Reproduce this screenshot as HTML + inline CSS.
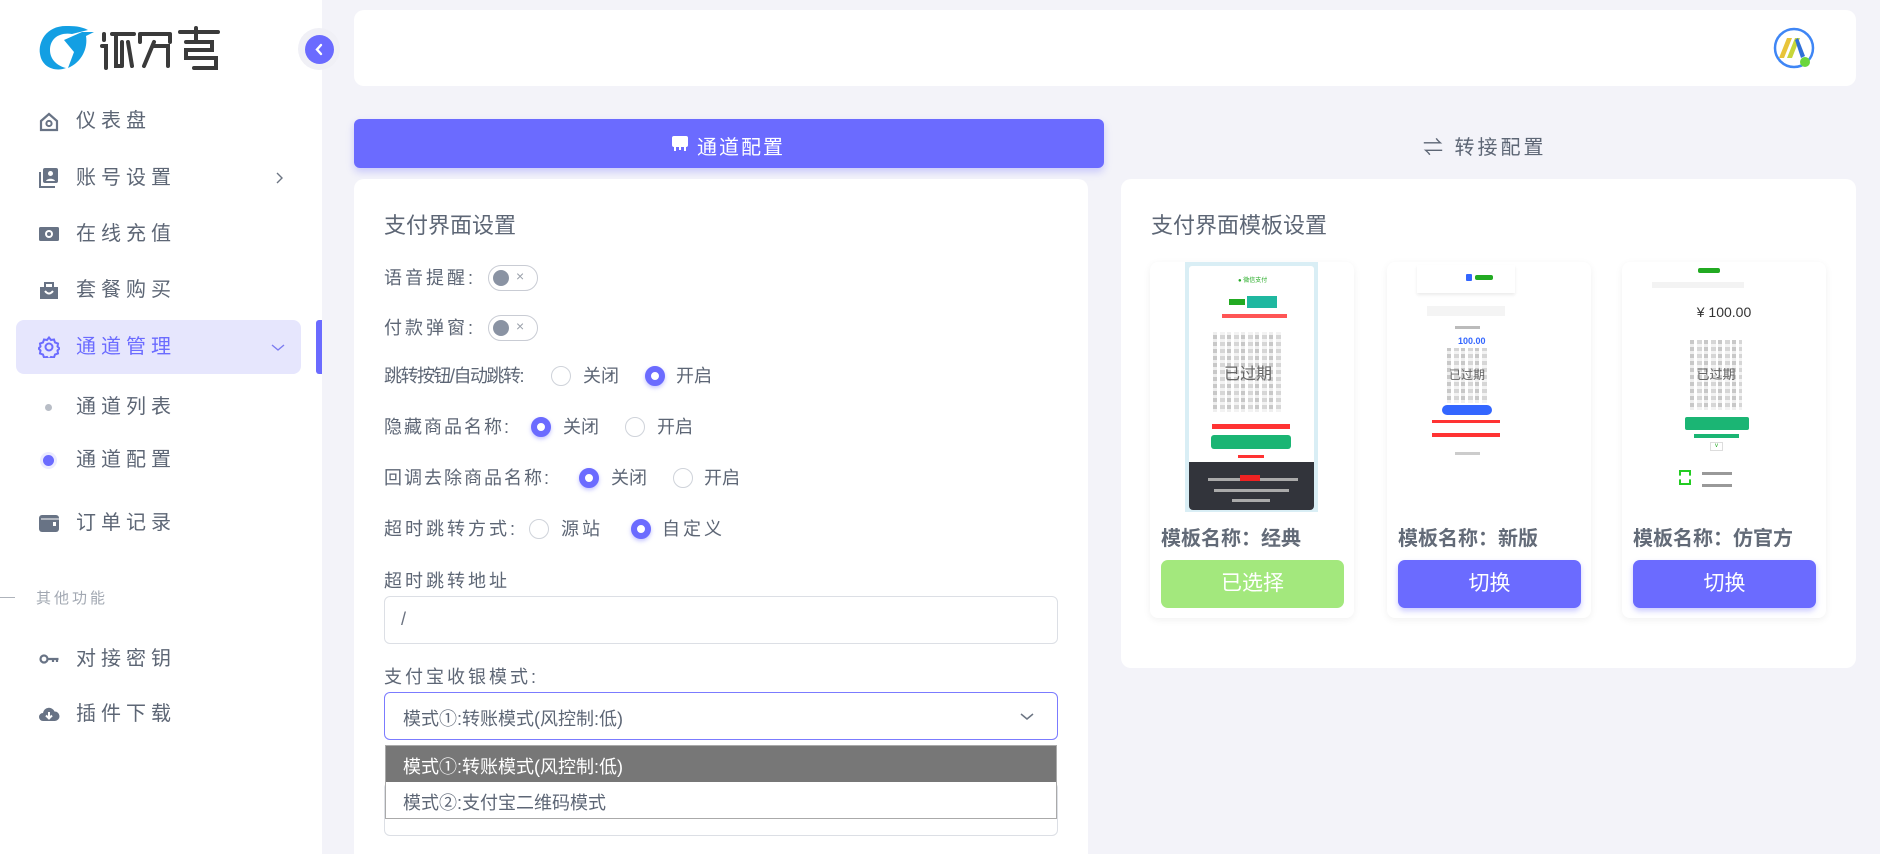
<!DOCTYPE html>
<html style="width:1880px;height:854px;overflow:hidden"><head><meta charset="utf-8">
<style>
*{margin:0;padding:0;box-sizing:border-box}
body{width:1880px;height:854px;overflow:hidden;background:#f3f3f9;font-family:"Liberation Sans","Noto Sans CJK SC",sans-serif;color:#5b6474;position:relative}
.abs{position:absolute}
.side{left:0;top:0;width:322px;height:854px;background:#fff}
.mi{position:absolute;left:76px;font-size:20px;letter-spacing:5px;color:#5d6675;line-height:24px}
.ic{position:absolute;left:38px;width:22px;height:22px}
.card{background:#fff;border-radius:10px;position:absolute}
.lbl{position:absolute;left:384px;font-size:18px;letter-spacing:3px;color:#5d6675;line-height:22px}
.tog{position:absolute;width:50px;height:26px;border:1px solid #c9ccd4;border-radius:13px;background:#fff}
.tog i{position:absolute;left:4px;top:4px;width:16px;height:16px;border-radius:50%;background:#8a93a3}
.tog b{position:absolute;left:27px;top:2px;font-size:14px;font-weight:normal;color:#9aa0aa}
.rd{position:absolute;width:20px;height:20px;border-radius:50%;border:1px solid #cfd3da;background:#fff}
.rd.on{border:6px solid #6b6bff;box-shadow:0 2px 4px rgba(107,107,255,.4)}
.rt{position:absolute;font-size:18px;color:#5d6675;line-height:22px}
.inp{position:absolute;left:384px;width:674px;height:48px;border:1px solid #dcdfe5;border-radius:6px;background:#fff}
.tc{position:absolute;top:262px;width:204px;height:356px;background:#fff;border-radius:8px;box-shadow:0 2px 8px rgba(0,0,0,.06)}
.tn{position:absolute;left:11px;top:260px;font-size:20px;font-weight:bold;color:#636b78}
.tb{position:absolute;left:11px;top:298px;width:183px;height:48px;border-radius:7px;color:#fff;font-size:21px;text-align:center;line-height:48px}
.qr{position:absolute;background:
 repeating-linear-gradient(90deg,#c8c8c8 0 4px,#fff 4px 7px,#d6d6d6 7px 12px,#fff 12px 14px),
 #ddd;}
.qr:after{content:"";position:absolute;inset:0;background:repeating-linear-gradient(0deg,rgba(255,255,255,.7) 0 3px,transparent 3px 7px)}
.qx{position:absolute;z-index:2;color:#666;text-align:center;width:100%}
</style></head><body>
<div class="abs side"></div>
<svg class="abs" style="left:36px;top:22px" width="190" height="52" viewBox="0 0 190 52">
<path d="M30 4 C10 4 2 20 4 32 C6 46 20 50 30 46 C22 44 14 38 14 28 C14 16 24 10 36 12 L52 8 C44 4 38 4 30 4Z" fill="#139fe3"/>
<path d="M28 18 L38 30 L32 46 C46 40 52 26 50 14 L58 10 L46 10Z" fill="#139fe3"/>
<g fill="none" stroke="#3a3a3a" stroke-width="4" stroke-linecap="round">
<path d="M68 12v6M66 24h4v22"/><path d="M76 12h22M80 12v32h6M86 20v24M92 20l4 24"/>
<path d="M104 12h30M104 12v8M134 12v8M118 20l-10 24M118 24h14v20"/>
<path d="M144 10h38M160 6v12M150 20h26v8h-26v8h30v10h-22"/>
</g></svg>
<div class="abs" style="left:298px;top:28px;width:42px;height:42px;border-radius:50%;background:#f0f0f6"></div>
<div class="abs" style="left:305px;top:35px;width:29px;height:29px;border-radius:50%;background:#6b6bff"></div>
<svg class="abs" style="left:312px;top:42px" width="15" height="15"><path d="M9 3 L5 7.5 L9 12" stroke="#fff" stroke-width="2.4" fill="none" stroke-linecap="round"/></svg>

<svg class="ic" style="top:111px" viewBox="0 0 22 22"><path d="M3 10 L11 3 L19 10 V19 H3Z" fill="none" stroke="#687385" stroke-width="2.2"/><circle cx="11" cy="12.5" r="2.6" fill="none" stroke="#687385" stroke-width="2"/></svg>
<div class="mi" style="top:109px">仪表盘</div>
<svg class="ic" style="top:167px" viewBox="0 0 22 22"><rect x="5" y="1" width="15" height="15" rx="2" fill="#687385"/><path d="M2 5v15h15" stroke="#687385" stroke-width="2" fill="none"/><circle cx="12.5" cy="6.5" r="2.5" fill="#fff"/><path d="M8 14c1-3 8-3 9 0z" fill="#fff"/></svg>
<div class="mi" style="top:166px">账号设置</div>
<svg class="abs" style="left:274px;top:170px" width="12" height="16"><path d="M3 3l5 5-5 5" stroke="#6c7583" stroke-width="1.4" fill="none"/></svg>
<svg class="ic" style="top:223px" viewBox="0 0 22 22"><rect x="1" y="4" width="20" height="14" rx="1.5" fill="#687385"/><circle cx="11" cy="11" r="4" fill="#fff"/><circle cx="11" cy="11" r="2" fill="#687385"/></svg>
<div class="mi" style="top:222px">在线充值</div>
<svg class="ic" style="top:279px" viewBox="0 0 22 22"><path d="M2 8h18v12H2z" fill="#687385"/><path d="M7 8V4h8v4" stroke="#687385" stroke-width="2" fill="none"/><path d="M7 12q4 5 8 0" stroke="#fff" stroke-width="2" fill="none"/></svg>
<div class="mi" style="top:278px">套餐购买</div>
<div class="abs" style="left:16px;top:320px;width:285px;height:54px;background:#e6e6fd;border-radius:8px"></div>
<div class="abs" style="left:316px;top:320px;width:6px;height:54px;background:#6b6bff;border-radius:3px 0 0 3px"></div>
<svg class="ic" style="top:336px" viewBox="0 0 22 22"><path d="M11 1.5l2 2.5 3-.5 1 3 3 1-.5 3 2 2-2 2 .5 3-3 1-1 3-3-.5-2 2.5-2-2.5-3 .5-1-3-3-1 .5-3-2-2 2-2-.5-3 3-1 1-3 3 .5z" fill="none" stroke="#6b6bff" stroke-width="2"/><circle cx="11" cy="11" r="3.5" fill="none" stroke="#6b6bff" stroke-width="2"/></svg>
<div class="mi" style="top:335px;color:#6b6bff">通道管理</div>
<svg class="abs" style="left:270px;top:342px" width="16" height="12"><path d="M2 3l6 5 6-5" stroke="#7c7cf0" stroke-width="1.4" fill="none"/></svg>
<div class="abs" style="left:45px;top:404px;width:7px;height:7px;border-radius:50%;background:#b8bdc6"></div>
<div class="mi" style="top:395px">通道列表</div>
<div class="abs" style="left:40px;top:452px;width:17px;height:17px;border-radius:50%;background:#ebebff"></div>
<div class="abs" style="left:43px;top:455px;width:11px;height:11px;border-radius:50%;background:#6b6bff"></div>
<div class="mi" style="top:448px">通道配置</div>
<svg class="ic" style="top:512px" viewBox="0 0 22 22"><rect x="1" y="3" width="20" height="17" rx="3" fill="#687385"/><path d="M3 7h18" stroke="#fff" stroke-width="1"/><rect x="15" y="10" width="3" height="4" fill="#fff"/></svg>
<div class="mi" style="top:511px">订单记录</div>
<div class="abs" style="left:0;top:597px;width:15px;height:1px;background:#aeb3bb"></div>
<div class="abs" style="left:36px;top:587px;font-size:15px;letter-spacing:3px;color:#a2a8b2">其他功能</div>
<svg class="ic" style="top:648px" viewBox="0 0 22 22"><circle cx="6" cy="11" r="3.5" fill="none" stroke="#687385" stroke-width="2.2"/><path d="M9.5 11h11M15 11v3M19 11v3" stroke="#687385" stroke-width="2.2"/></svg>
<div class="mi" style="top:647px">对接密钥</div>
<svg class="ic" style="top:703px" viewBox="0 0 22 22"><path d="M5 18a4 4 0 0 1 0-8 6 6 0 0 1 11.5-1.5A4.5 4.5 0 0 1 17 18z" fill="#687385"/><path d="M11 9v6M8 12.5l3 3 3-3" stroke="#fff" stroke-width="2" fill="none"/></svg>
<div class="mi" style="top:702px">插件下载</div>

<div class="card" style="left:354px;top:10px;width:1502px;height:76px"></div>
<svg class="abs" style="left:1772px;top:26px" width="46" height="46" viewBox="0 0 46 46">
<circle cx="22" cy="22" r="19" fill="none" stroke="#3f86f5" stroke-width="2.5"/>
<path d="M7 32 L15 12 L20 12 L12 32Z" fill="#e8c43a"/><path d="M15 32 L23 12 L28 12 L20 32Z" fill="#c7d63b"/>
<path d="M26 12 L33 30 L29 32 L23 14Z" fill="#2f6fd8"/><circle cx="33" cy="36" r="5" fill="#6ad63c"/></svg>

<div class="abs" style="left:354px;top:119px;width:750px;height:49px;background:#6b6bff;border-radius:6px;box-shadow:0 4px 8px rgba(107,107,255,.3)"></div>
<svg class="abs" style="left:671px;top:134px" width="18" height="20"><rect x="1" y="2" width="16" height="11" rx="2" fill="#fff"/><path d="M4 13v4M9 13v3M14 13v4" stroke="#fff" stroke-width="2"/></svg>
<div class="abs" style="left:697px;top:131px;font-size:20px;letter-spacing:2px;color:#fff">通道配置</div>
<div class="abs" style="left:1423px;top:131px;font-size:20px;letter-spacing:3px;color:#5d6675">⇌ 转接配置</div>

<div class="card" style="left:354px;top:179px;width:734px;height:700px;border-radius:10px 10px 0 0"></div>
<div class="abs" style="left:384px;top:208px;font-size:22px;color:#5d6675">支付界面设置</div>
<div class="lbl" style="top:267px">语音提醒:</div>
<div class="tog" style="left:488px;top:265px"><i></i><b>×</b></div>
<div class="lbl" style="top:317px">付款弹窗:</div>
<div class="tog" style="left:488px;top:315px"><i></i><b>×</b></div>
<div class="lbl" style="top:365px;letter-spacing:-1.5px">跳转按钮/自动跳转:</div>
<div class="rd" style="left:551px;top:366px"></div><div class="rt" style="left:583px;top:365px">关闭</div>
<div class="rd on" style="left:645px;top:366px"></div><div class="rt" style="left:676px;top:365px">开启</div>
<div class="lbl" style="top:416px;letter-spacing:2px">隐藏商品名称:</div>
<div class="rd on" style="left:531px;top:417px"></div><div class="rt" style="left:563px;top:416px">关闭</div>
<div class="rd" style="left:625px;top:417px"></div><div class="rt" style="left:657px;top:416px">开启</div>
<div class="lbl" style="top:467px;letter-spacing:2px">回调去除商品名称:</div>
<div class="rd on" style="left:579px;top:468px"></div><div class="rt" style="left:611px;top:467px">关闭</div>
<div class="rd" style="left:673px;top:468px"></div><div class="rt" style="left:704px;top:467px">开启</div>
<div class="lbl" style="top:518px">超时跳转方式:</div>
<div class="rd" style="left:529px;top:519px"></div><div class="rt" style="left:561px;top:518px;letter-spacing:3px">源站</div>
<div class="rd on" style="left:631px;top:519px"></div><div class="rt" style="left:662px;top:518px;letter-spacing:3px">自定义</div>
<div class="lbl" style="top:570px">超时跳转地址</div>
<div class="inp" style="top:596px"><div class="abs" style="left:16px;top:12px;font-size:18px;color:#6b7280">/</div></div>
<div class="lbl" style="top:666px">支付宝收银模式:</div>
<div class="inp" style="top:692px;border-color:#7b7bff"><div class="abs" style="left:18px;top:12px;font-size:18px;color:#5d6675">模式①:转账模式(风控制:低)</div>
<svg class="abs" style="left:634px;top:18px" width="16" height="12"><path d="M2 3l6 5 6-5" stroke="#6c7583" stroke-width="1.5" fill="none"/></svg></div>
<div class="inp" style="top:782px;height:54px"></div>
<div class="abs" style="left:385px;top:745px;width:672px;height:74px;background:#fff;border:1px solid #aaa"></div>
<div class="abs" style="left:386px;top:746px;width:670px;height:36px;background:#777"></div>
<div class="abs" style="left:403px;top:753px;font-size:18px;color:#fff">模式①:转账模式(风控制:低)</div>
<div class="abs" style="left:403px;top:789px;font-size:18px;color:#5d6675">模式②:支付宝二维码模式</div>

<div class="card" style="left:1121px;top:179px;width:735px;height:489px"></div>
<div class="abs" style="left:1151px;top:208px;font-size:22px;color:#5d6675">支付界面模板设置</div>

<div class="tc" style="left:1150px">
 <div class="abs" style="left:35px;top:0;width:133px;height:250px;background:#d9eef5"></div>
 <div class="abs" style="left:39px;top:4px;width:125px;height:200px;background:#fff;border-radius:3px"></div>
 <div class="abs" style="left:88px;top:13px;font-size:6px;color:#2a2">● 微信支付</div>
 <div class="abs" style="left:79px;top:37px;width:16px;height:6px;background:#2a2"></div>
 <div class="abs" style="left:97px;top:34px;width:30px;height:12px;background:#1fb8a0"></div>
 <div class="abs" style="left:72px;top:52px;width:65px;height:4px;background:#f55"></div>
 <div class="qr" style="left:63px;top:70px;width:70px;height:80px"><div class="qx" style="top:28px;font-size:16px">已过期</div></div>
 <div class="abs" style="left:62px;top:162px;width:78px;height:5px;background:#f33"></div>
 <div class="abs" style="left:61px;top:173px;width:80px;height:14px;background:#1bb574;border-radius:3px"></div>
 <div class="abs" style="left:88px;top:193px;width:26px;height:3px;background:#f33"></div>
 <div class="abs" style="left:39px;top:200px;width:125px;height:48px;background:#32343b;border-radius:0 0 4px 4px"></div>
 <div class="abs" style="left:58px;top:216px;width:90px;height:3px;background:#aaa"></div><div class="abs" style="left:90px;top:213px;width:20px;height:6px;background:#e22"></div>
 <div class="abs" style="left:64px;top:227px;width:75px;height:3px;background:#aaa"></div>
 <div class="abs" style="left:82px;top:237px;width:38px;height:3px;background:#aaa"></div>
 <div class="tn">模板名称：经典</div>
 <div class="tb" style="background:#a3e87d">已选择</div>
</div>

<div class="tc" style="left:1387px">
 <div class="abs" style="left:30px;top:3px;width:98px;height:28px;background:#fff;box-shadow:0 2px 3px rgba(0,0,0,.08)"></div>
 <div class="abs" style="left:79px;top:12px;width:6px;height:7px;background:#36f;border-radius:1px"></div><div class="abs" style="left:88px;top:13px;width:18px;height:5px;background:#2a2;border-radius:2px"></div>
 <div class="abs" style="left:40px;top:44px;width:78px;height:10px;background:#f4f4f4"></div>
 <div class="abs" style="left:68px;top:64px;width:25px;height:3px;background:#bbb"></div>
 <div class="abs" style="left:71px;top:74px;font-size:9px;font-weight:bold;color:#36f">100.00</div>
 <div class="qr" style="left:60px;top:86px;width:40px;height:55px"><div class="qx" style="top:18px;font-size:12px">已过期</div></div>
 <div class="abs" style="left:55px;top:143px;width:50px;height:10px;background:#36f;border-radius:5px"></div>
 <div class="abs" style="left:45px;top:158px;width:68px;height:3px;background:#f33"></div>
 <div class="abs" style="left:45px;top:171px;width:68px;height:4px;background:#f33"></div>
 <div class="abs" style="left:68px;top:190px;width:25px;height:3px;background:#ccc"></div>
 <div class="tn">模板名称：新版</div>
 <div class="tb" style="background:#6b6bff;box-shadow:0 3px 6px rgba(107,107,255,.35)">切换</div>
</div>

<div class="tc" style="left:1622px">
 <div class="abs" style="left:76px;top:6px;width:22px;height:5px;background:#2a2;border-radius:2px"></div>
 <div class="abs" style="left:30px;top:20px;width:92px;height:6px;background:#f3f3f3"></div>
 <div class="abs" style="left:0;top:42px;width:204px;text-align:center;font-size:14px;color:#333">¥ 100.00</div>
 <div class="qr" style="left:68px;top:78px;width:52px;height:70px"><div class="qx" style="top:24px;font-size:13px">已过期</div></div>
 <div class="abs" style="left:63px;top:155px;width:64px;height:13px;background:#1bb574;border-radius:2px"></div>
 <div class="abs" style="left:72px;top:172px;width:45px;height:4px;background:#1bb574"></div>
 <div class="abs" style="left:88px;top:180px;width:13px;height:9px;border:1px solid #ddd;font-size:6px;color:#2a2;text-align:center">v</div>
 <div class="abs" style="left:57px;top:208px;width:12px;height:15px;border:2px dashed #2c2"></div>
 <div class="abs" style="left:80px;top:210px;width:30px;height:3px;background:#999"></div>
 <div class="abs" style="left:80px;top:222px;width:30px;height:3px;background:#999"></div>
 <div class="tn">模板名称：仿官方</div>
 <div class="tb" style="background:#6b6bff;box-shadow:0 3px 6px rgba(107,107,255,.35)">切换</div>
</div>
</body></html>
